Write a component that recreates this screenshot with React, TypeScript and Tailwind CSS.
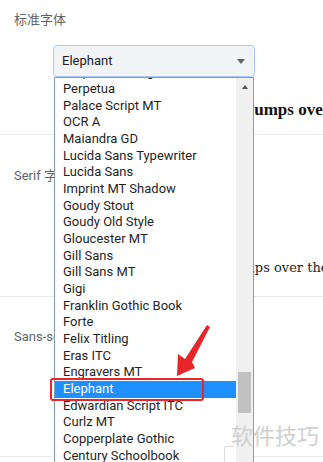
import React from 'react';

const FONTS = [
  'Perpetua Titling MT',
  'Perpetua',
  'Palace Script MT',
  'OCR A',
  'Maiandra GD',
  'Lucida Sans Typewriter',
  'Lucida Sans',
  'Imprint MT Shadow',
  'Goudy Stout',
  'Goudy Old Style',
  'Gloucester MT',
  'Gill Sans',
  'Gill Sans MT',
  'Gigi',
  'Franklin Gothic Book',
  'Forte',
  'Felix Titling',
  'Eras ITC',
  'Engravers MT',
  'Elephant',
  'Edwardian Script ITC',
  'Curlz MT',
  'Copperplate Gothic',
  'Century Schoolbook',
  'Centaur',
];

const SELECTED = 'Elephant';

const FontList: React.FC = () => (
  <div className="absolute left-[54px] top-[77px] w-[200px] h-[400px] flex border border-[#7f9db9] bg-white">
    {/* Options */}
    <div className="flex-1 overflow-hidden">
      <div className="-mt-[13.7px]">
        {FONTS.map((name) => (
          <div
            key={name}
            className={`h-[16.68px] leading-[16.68px] pl-[8px] text-[13px] whitespace-nowrap ${
              name === SELECTED ? 'bg-[#1e90ff] text-white' : 'text-[#1f1f1f]'
            }`}
          >
            {name}
          </div>
        ))}
      </div>
    </div>

    {/* Scrollbar */}
    <div className="w-[17px] bg-[#f0f0f0] flex flex-col items-center">
      <div className="mt-[7px] w-0 h-0 border-l-[3.5px] border-r-[3.5px] border-b-[4px] border-l-transparent border-r-transparent border-b-[#505050]" />
      <div className="mt-[283px] w-[13px] h-[41px] bg-[#c1c1c1]" />
    </div>
  </div>
);

const Annotation: React.FC = () => (
  <>
    <svg className="absolute left-0 top-0" width="323" height="462" viewBox="0 0 323 462">
      <polygon
        points="207,325 210,327 192,362 195,368 177,376 178,354 185,359"
        fill="#e8262a"
      />
    </svg>
    <div className="absolute left-[50px] top-[378px] w-[154px] h-[23px] rounded-[3px] border-[2.5px] border-[#e5262b]" />
  </>
);

export default function App() {
  return (
    <div
      className="relative w-[323px] h-[462px] overflow-hidden bg-white"
      style={{ fontFamily: 'Roboto, "Noto Sans CJK SC", sans-serif' }}
    >
      {/* 标准字体 */}
      <section className="h-[135px] border-b border-[#e8eaed]">
        <div className="pt-[10px] pl-[14px] text-[13px] leading-[20px] text-[#5f6368]">标准字体</div>
        <div className="mt-[15px] ml-[53px] w-[202px] h-[32px] rounded-[4px] border border-[#a8c7fa] bg-[#f1f3f4] flex items-center pl-[8px] pr-[9px]">
          <span className="flex-1 text-[13px] text-[#202124]">Elephant</span>
          <div className="w-0 h-0 border-l-[4.5px] border-r-[4.5px] border-t-[5px] border-l-transparent border-r-transparent border-t-[#5f6368]" />
        </div>
        <div
          className="mt-[21px] pl-[93px] text-[17px] leading-[24px] font-bold text-[#111] whitespace-nowrap"
          style={{ fontFamily: '"Liberation Serif", serif' }}
        >
          The quick brown fox jumps over the lazy dog
        </div>
      </section>

      {/* Serif 字体 */}
      <section className="h-[162px] border-b border-[#e8eaed]">
        <div className="pt-[31px] pl-[14px] text-[13px] leading-[20px] text-[#5f6368]">Serif 字体</div>
        <div
          className="mt-[72px] pl-[91px] text-[13px] leading-[20px] text-[#222] whitespace-nowrap"
          style={{ fontFamily: '"DejaVu Serif", serif' }}
        >
          The quick brown fox jumps over the lazy dog
        </div>
      </section>

      {/* Sans-serif 字体 */}
      <section className="h-[160px] border-b border-[#e8eaed]">
        <div className="pt-[30px] pl-[14px] text-[13px] leading-[20px] text-[#5f6368]">Sans-serif 字体</div>
      </section>

      <FontList />
      <Annotation />

      {/* watermark */}
      <div
        className="absolute left-[231px] top-[420px] text-[22px] leading-[28px] text-[#cfcfcf] whitespace-nowrap"
        style={{ fontFamily: '"Noto Sans CJK SC", sans-serif' }}
      >
        软件技巧
      </div>
      <div className="absolute left-[224px] top-[446px] w-[10px] h-[20px] border-l border-t border-[#dcdcdc] rounded-tl-[3px]" />
    </div>
  );
}
